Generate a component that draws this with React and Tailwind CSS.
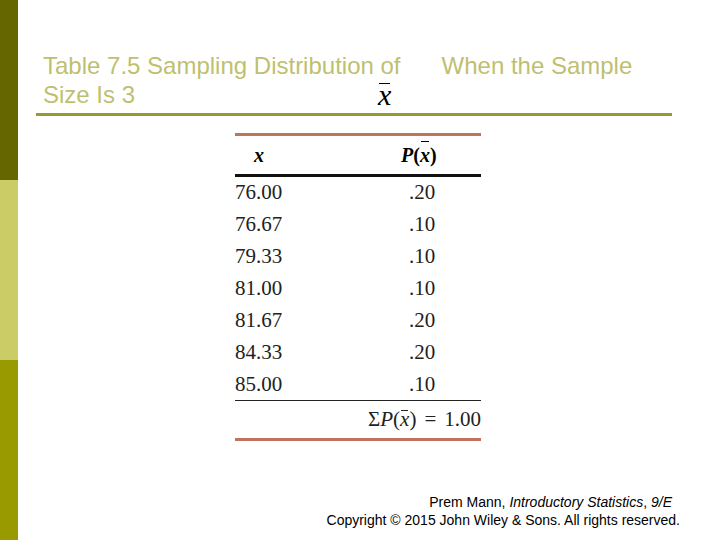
import React from 'react';

const rows = [
  ['76.00', '.20'],
  ['76.67', '.10'],
  ['79.33', '.10'],
  ['81.00', '.10'],
  ['81.67', '.20'],
  ['84.33', '.20'],
  ['85.00', '.10'],
];

function XBar({ className = '' }) {
  return (
    <span className={`relative inline-block italic ${className}`}>
      <span className="absolute left-[1px] right-[1px] top-[0.05em] border-t border-current" />
      x
    </span>
  );
}

export default function App() {
  return (
    <div className="w-[720px] h-[540px] bg-white flex overflow-hidden">
      <div className="w-[18px] h-full flex flex-col shrink-0">
        <div className="h-[180px] bg-[#666600]" />
        <div className="h-[180px] bg-[#cccc66]" />
        <div className="h-[180px] bg-[#999900]" />
      </div>

      <div className="flex-1 flex flex-col">
        {/* title */}
        <div className="pl-[18px] pr-[48px] pt-[51px]">
          <div className="relative font-['Liberation_Sans',Arial,sans-serif] text-[24px] leading-[29px] text-[#bfbf70] pl-[7px]">
            <div className="flex">
              <span>Table 7.5 Sampling Distribution of</span>
              <span className="ml-[41px]">When the Sample</span>
            </div>
            <div>Size Is 3</div>
            <span className="absolute left-[342px] top-[30px] font-['Liberation_Serif',serif] text-[30px] leading-[28px] text-black">
              <XBar />
            </span>
          </div>
          <div className="mt-[4px] h-[3px] bg-[#999933]" />
        </div>

        {/* table */}
        <div className="ml-[217px] mt-[17px] w-[246px] font-['Liberation_Serif',serif] text-[#222]">
          <div className="h-[3px] bg-[#c0735e]" />
          <div className="flex h-[38px] items-center text-[20px] font-bold text-black">
            <span className="italic ml-[19px]">x</span>
            <span className="ml-[137px]">
              <span className="italic">P</span>(<XBar className="font-bold" />)
            </span>
          </div>
          <div className="h-[3px] bg-[#111]" />
          <div className="flex flex-col mt-[-1px]">
            {rows.map(([x, p]) => (
              <div key={x} className="flex h-[32px] items-center text-[21px] leading-none">
                <span className="w-[174px]">{x}</span>
                <span>{p}</span>
              </div>
            ))}
          </div>
          <div className="h-[1px] bg-[#222]" />
          <div className="flex h-[37px] items-center justify-end text-[21px] leading-none">
            <span>
              Σ<span className="italic">P</span>(<XBar />)
              <span className="mx-[8px]">=</span>1.00
            </span>
          </div>
          <div className="h-[3px] bg-[#c0735e]" />
        </div>

        {/* footer */}
        <div className="mt-auto mb-[11px] pr-[40px] text-right font-['Liberation_Sans',Arial,sans-serif] text-[14px] leading-[18px] text-black">
          <div className="pr-[8px]">
            Prem Mann, <span className="italic">Introductory Statistics</span>, <span className="italic">9/E</span>
          </div>
          <div>Copyright © 2015 John Wiley &amp; Sons. All rights reserved.</div>
        </div>
      </div>
    </div>
  );
}
